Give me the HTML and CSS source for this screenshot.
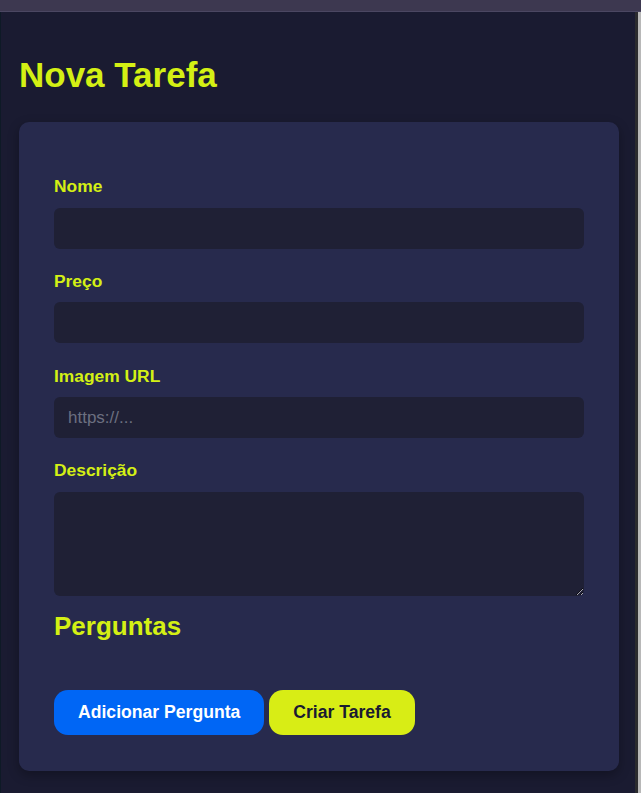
FILE: index.html
```html
<!DOCTYPE html>
<html lang="pt">
<head>
<meta charset="utf-8">
<title>Nova Tarefa</title>
<link rel="stylesheet" href="styles.css">
</head>
<body>
<div class="window">
  <div class="topbar"></div>
  <div class="frame">
    <main class="main">
      <h1 class="title">Nova Tarefa</h1>
      <form class="card">
        <label class="label" for="nome">Nome</label>
        <input class="field" id="nome" type="text">
        <label class="label" for="preco">Preço</label>
        <input class="field" id="preco" type="text">
        <label class="label" for="img">Imagem URL</label>
        <input class="field" id="img" type="text" placeholder="https://...">
        <label class="label" for="desc">Descrição</label>
        <textarea class="field area" id="desc"></textarea>
        <h2 class="subtitle">Perguntas</h2>
        <div class="actions">
          <button type="button" class="btn btn-blue">Adicionar Pergunta</button>
          <button type="button" class="btn btn-lime">Criar Tarefa</button>
        </div>
      </form>
    </main>
    <div class="scrollstrip"></div>
  </div>
</div>
</body>
</html>
```
FILE: styles.css
```css
* { box-sizing: border-box; }
html, body {
  margin: 0;
  padding: 0;
  height: 100%;
  background: #1a1b31;
  font-family: "Liberation Sans", Arial, sans-serif;
}
.window {
  display: flex;
  flex-direction: column;
  height: 793px;
  overflow: hidden;
}
.topbar {
  height: 12px;
  flex: none;
  background: #3d3850;
  border-bottom: 1px solid #4b4762;
}
.frame {
  flex: 1;
  display: flex;
  border-left: 1px solid #0e1a26;
}
.main {
  flex: 1;
  padding: 0 16px 0 18px;
  background: #1a1b31;
}
.scrollstrip {
  width: 6px;
  flex: none;
  background: #2b2b2e;
  border-right: 3px solid #b8b8b8;
}
.title {
  margin: 43px 0 28px;
  font-size: 35px;
  font-weight: bold;
  line-height: 39px;
  color: #d4f014;
}
.card {
  display: flex;
  flex-direction: column;
  background: #272a4d;
  border-radius: 10px;
  padding: 55px 35px 36px;
  box-shadow: 0 4px 12px rgba(0, 0, 0, 0.3);
}
.label {
  display: block;
  font-size: 17.4px;
  font-weight: bold;
  line-height: 19.5px;
  color: #d4f014;
  margin-bottom: 11px;
}
.field {
  display: block;
  width: 100%;
  height: 41px;
  margin: 0 0 23.3px;
  border: none;
  border-radius: 6px;
  background: #1f2035;
  color: #e6e6e6;
  padding: 0 14px;
  font-family: "Liberation Sans", Arial, sans-serif;
  font-size: 17px;
  outline: none;
}
.field::placeholder { color: #6c6f80; }
.area {
  height: 104px;
  margin-bottom: 15px;
  padding: 10px 14px;
  resize: vertical;
}
.subtitle {
  margin: 0 0 49px;
  font-size: 26px;
  line-height: 30px;
  font-weight: bold;
  color: #d4f014;
}
.actions {
  display: flex;
  gap: 5px;
}
.btn {
  border: none;
  border-radius: 14px;
  height: 45px;
  padding: 0 24px;
  font-family: "Liberation Sans", Arial, sans-serif;
  font-size: 17.6px;
  font-weight: bold;
  cursor: pointer;
}
.btn-blue {
  background: #0066f5;
  color: #ffffff;
}
.btn-lime {
  background: #d8ed15;
  color: #1a1b31;
}
```
